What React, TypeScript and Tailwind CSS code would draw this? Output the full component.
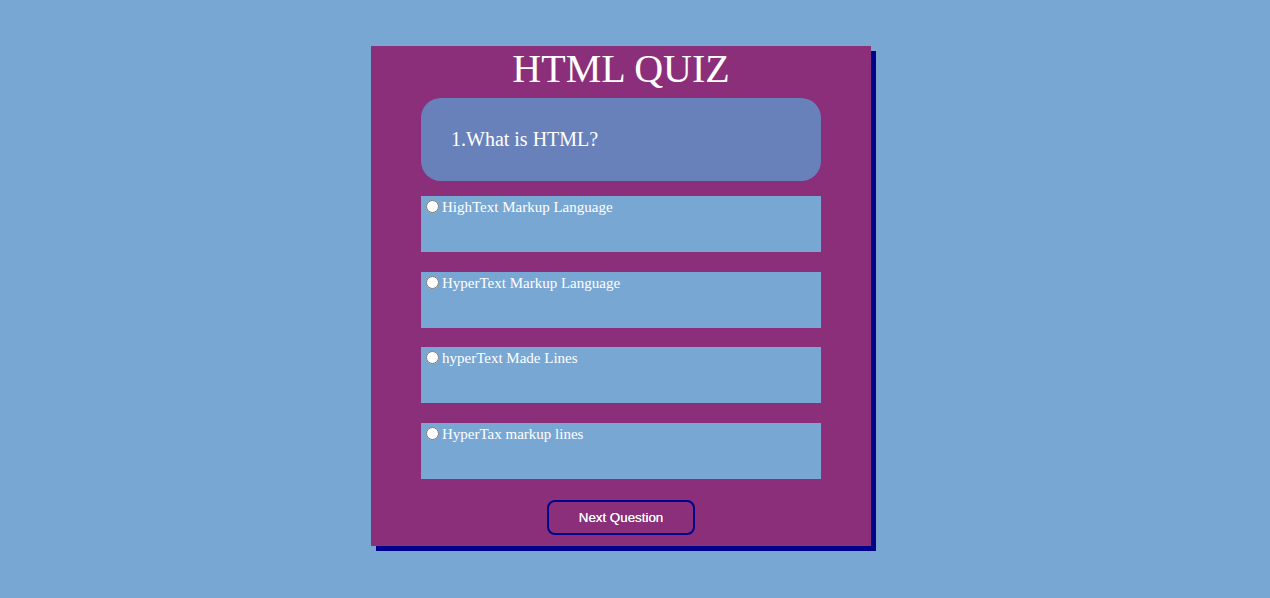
import React, { useState } from 'react';

const options = [
  'HighText Markup Language',
  'HyperText Markup Language',
  'hyperText Made Lines',
  'HyperTax markup lines',
];

export default function App() {
  const [picked, setPicked] = useState<number | null>(null);

  return (
    <div className="min-h-[598px] w-full bg-[#78a7d4] pt-[46px] pl-[371px]">
      <div className="flex h-[500px] w-[500px] flex-col items-center bg-[#8b2f7b] shadow-[5px_5px_0_#00008b] font-['Liberation_Serif',serif] text-white">
        <h1 className="text-[40px] leading-[46px] font-normal">HTML QUIZ</h1>

        <div className="mt-[6px] w-[400px] rounded-[20px] bg-[#6881bb] p-[30px] text-[20px] leading-[23px]">
          1.What is HTML?
        </div>

        <div className="mt-[15px] flex w-[400px] flex-col gap-[19.7px]">
          {options.map((opt, i) => (
            <label key={opt} className="block h-[56px] bg-[#78a7d4] pt-[1px] text-[15px] leading-[17px]">
              <input
                type="radio"
                name="answer"
                checked={picked === i}
                onChange={() => setPicked(i)}
                className="ml-[5px] mr-[3px] mt-[3px] align-[-1px]"
              />
              {opt}
            </label>
          ))}
        </div>

        <button className="mt-[21px] h-[35px] w-[148px] rounded-[8px] border-2 border-[#00008b] font-['Liberation_Sans',Arial,sans-serif] text-[13.33px] text-white [text-shadow:0_0_0.4px_#fff]">
          Next Question
        </button>
      </div>
    </div>
  );
}
